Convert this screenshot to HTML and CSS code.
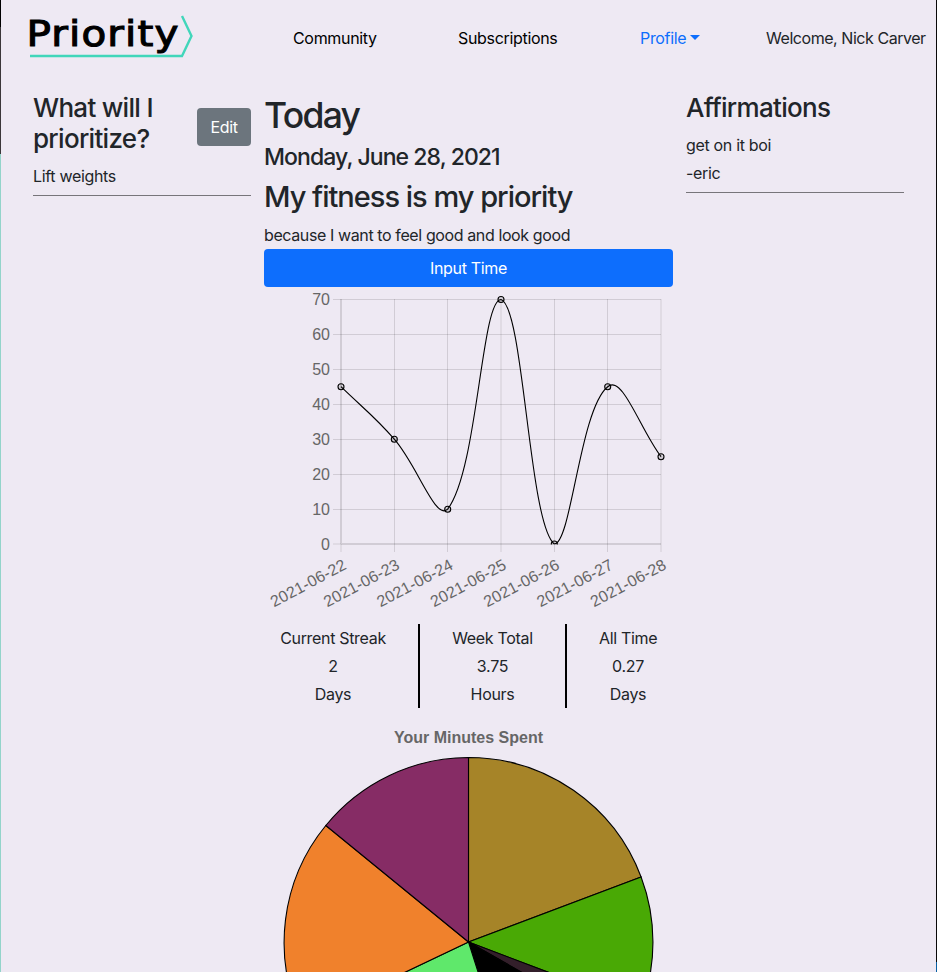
FILE: index.html
```html
<!DOCTYPE html>
<html lang="en">
<head>
<meta charset="utf-8">
<title>Priority</title>
<link rel="stylesheet" href="styles.css">
</head>
<body>
<div class="frame">
  <div class="edge-left"></div>
  <div class="page">
    <header class="navbar">
      <svg class="logo" width="180" height="60" viewBox="20 5 180 60" role="img" aria-label="Priority">
        <text class="logo-text" x="26.500" y="45.500" textLength="153" lengthAdjust="spacingAndGlyphs">Priority</text>
        <path class="logo-line" d="M30 56H182L191.500 36L182 16"/>
      </svg>
      <nav class="nav">
        <a class="community"><span>Community</span></a>
        <a class="subs"><span>Subscriptions</span></a>
        <a class="profile">Profile<i class="caret"></i></a>
        <span class="welcome">Welcome, Nick Carver</span>
      </nav>
    </header>
    <main class="columns">
      <section class="side">
        <div class="side-top">
          <h3>What will I<br>prioritize?</h3>
          <button class="btn edit">Edit</button>
        </div>
        <p class="weights">Lift weights</p>
        <hr>
      </section>
      <section class="center">
        <h1>Today</h1>
        <h4>Monday, June 28, 2021</h4>
        <h2>My fitness is my priority</h2>
        <p class="reason">because I want to feel good and look good</p>
        <button class="btn primary">Input Time</button>
        <svg class="chart" width="409" height="329" viewBox="264 287 409 329">
          <defs><clipPath id="plot"><rect x="336" y="294" width="330" height="250.500"/></clipPath></defs>
          <g class="grid">
            <path d="M333 299.500H661M333 334.500H661M333 369.500H661M333 404.500H661M333 439.500H661M333 474.500H661M333 509.500H661"/>
            <path d="M394.500 299V552M447.500 299V552M501 299V552M554.500 299V552M607.500 299V552M661 299V552"/>
            <path d="M333 544H341M341 544V552"/>
          </g>
          <path class="axis" d="M341 299V544M341 544H661"/>
          <g class="ylabels">
            <text x="330" y="304.500">70</text><text x="330" y="339.500">60</text><text x="330" y="374.500">50</text><text x="330" y="409.500">40</text><text x="330" y="444.500">30</text><text x="330" y="479.500">20</text><text x="330" y="514.500">10</text><text x="330" y="549.500">0</text>
          </g>
          <g class="xlabels">
            <text transform="translate(347.500 568.300) rotate(-28)">2021-06-22</text>
            <text transform="translate(400.800 568.300) rotate(-28)">2021-06-23</text>
            <text transform="translate(454.200 568.300) rotate(-28)">2021-06-24</text>
            <text transform="translate(507.500 568.300) rotate(-28)">2021-06-25</text>
            <text transform="translate(560.800 568.300) rotate(-28)">2021-06-26</text>
            <text transform="translate(614.200 568.300) rotate(-28)">2021-06-27</text>
            <text transform="translate(667.500 568.300) rotate(-28)">2021-06-28</text>
          </g>
          <g class="line" clip-path="url(#plot)">
            <path d="M341 386.700C362.300 407.500 374.700 416.500 394.300 439.200C417.300 465.500 435.400 521 447.700 509.200C478 469.300 481.200 299.500 501 299.500C523.900 306.800 528.700 523 554.300 544C571.300 544 579.800 409.400 607.700 386.700C622.500 374.400 639.700 428.500 661 456.700"/>
            <circle cx="341" cy="386.700" r="3"/><circle cx="394.300" cy="439.200" r="3"/><circle cx="447.700" cy="509.200" r="3"/><circle cx="501" cy="299.500" r="3"/><circle cx="554.300" cy="544" r="3"/><circle cx="607.700" cy="386.700" r="3"/><circle cx="661" cy="456.700" r="3"/>
          </g>
        </svg>
        <div class="stats">
          <div class="stat first"><p>Current Streak</p><p>2</p><p>Days</p></div>
          <div class="stat"><p>Week Total</p><p>3.75</p><p>Hours</p></div>
          <div class="stat last"><p>All Time</p><p>0.27</p><p>Days</p></div>
        </div>
        <svg class="pie" width="409" height="264" viewBox="264 708 409 264">
          <text class="pie-title" x="468.500" y="742.500" textLength="149">Your Minutes Spent</text>
          <g class="slices">
            <path fill="#a68428" d="M468.500 942V757.500A184.500 184.500 0 0 1 641.100 877Z"/>
            <path fill="#49a905" d="M468.500 942L641.100 877A184.500 184.500 0 0 1 641 1007.400Z"/>
            <path fill="#331f2a" d="M468.500 942L641 1007.400A184.500 184.500 0 0 1 628.700 1033.500Z"/>
            <path fill="#000" d="M468.500 942L628.700 1033.500A184.500 184.500 0 0 1 524.400 1117.800Z"/>
            <path fill="#5fe86b" d="M468.500 942L524.400 1117.800A184.500 184.500 0 0 1 301.900 1021.300Z"/>
            <path fill="#f0812c" d="M468.500 942L301.900 1021.300A184.500 184.500 0 0 1 325.800 825.500Z"/>
            <path fill="#862c65" d="M468.500 942L325.800 825.500A184.500 184.500 0 0 1 468.500 757.500Z"/>
          </g>
        </svg>
      </section>
      <section class="side">
        <h3>Affirmations</h3>
        <p class="quote">get on it boi</p>
        <p class="quote author">-eric</p>
        <hr>
      </section>
    </main>
  </div>
  <div class="edge-right"></div>
</div>
</body>
</html>
```
FILE: styles.css
```css
* { box-sizing: border-box; }
body, h1, h2, h3, h4, p { margin: 0; }
body {
  height: 972px;
  overflow: hidden;
  background: #eee9f3;
  color: #212529;
  font: 16px/24px Inter, "Liberation Sans", sans-serif;
  letter-spacing: -0.32px;
}
.frame { display: grid; grid-template-columns: 1px 1fr 1px; height: 972px; }
.edge-left { background: linear-gradient(#000 27px, #3b3739 27px 154px, #93d4ca 154px); }
.edge-right { background: linear-gradient(#090909 962px, #0b61a4 962px); }
.page { min-width: 0; overflow: hidden; }
.navbar { display: flex; height: 77px; padding: 5px 10px 0 19px; }
.logo { flex: none; }
.logo-text { font: 36px "DejaVu Sans", sans-serif; letter-spacing: 1px; fill: #000; stroke: #000; stroke-width: 1.1px; }
.logo-line { fill: none; stroke: #41d6ba; stroke-width: 2.4px; }
.nav { display: flex; flex: 1; height: 24px; margin: 21px 0 0 93px; white-space: nowrap; }
.nav a { color: #000; }
.community { width: 165px; }
.subs { width: 182px; }
.nav .profile { width: 126px; color: #0d6efd; }
.welcome { letter-spacing: -.45px; }
.caret { display: inline-block; margin-left: 4px; vertical-align: 4px; border: 5px solid transparent; border-top-color: #0d6efd; border-bottom: 0; }
.columns { display: grid; grid-template-columns: 218px 409px 218px; column-gap: 13px; padding: 15px 0 0 32px; }
.side-top { display: flex; justify-content: space-between; }
h1, h2, h3, h4 { font-weight: 500; white-space: nowrap; }
h3 { font-size: 26px; line-height: 31px; letter-spacing: -.7px; }
.weights { margin-top: 10px; }
.side hr { height: 1px; border: 0; margin: 7px 0 0; background: #77757a; }
.btn { height: 38px; border: 0; border-radius: 4px; color: #fff; font: inherit; letter-spacing: inherit; padding: 0; }
.edit { width: 54px; margin-top: 16px; background: #6c757d; }
.center h1 { margin-top: 2px; font-size: 35.5px; line-height: 43px; letter-spacing: -1.7px; }
.center h4 { margin-top: 8px; font-size: 23px; line-height: 24px; letter-spacing: -.92px; }
.center h2 { margin-top: 10px; font-size: 29px; line-height: 36px; letter-spacing: -1px; }
.reason { margin-top: 8px; letter-spacing: -.39px; }
.primary { display: block; width: 409px; margin-top: 2px; background: #0d6efd; }
.chart, .pie { display: block; }
.grid { fill: none; stroke: #000; stroke-opacity: .12; }
.axis { fill: none; stroke: #000; stroke-opacity: .12; stroke-width: 2px; }
.ylabels, .xlabels { font: 16px "Liberation Sans", sans-serif; letter-spacing: 0; fill: #666; text-anchor: end; }
.xlabels { letter-spacing: .15px; }
.line { fill: none; stroke: #000; stroke-width: 1.1px; }
.line circle { fill: rgba(0, 0, 0, .1); }
.stats { display: grid; grid-template-columns: 156px 147px 106px; height: 84px; margin-top: 8px; text-align: center; line-height: 28px; }
.stat { border-right: 2px solid #000; white-space: nowrap; }
.stat.first { padding: 0 32px 0 16px; }
.stat.last { padding: 0 16px 0 32px; border: 0; }
.pie-title { font: bold 16px "Liberation Sans", sans-serif; letter-spacing: 0; fill: #666; text-anchor: middle; }
.slices { stroke: #000; stroke-width: 1.1px; }
.quote { margin-top: 10px; }
.quote.author { margin-top: 4px; }
```
